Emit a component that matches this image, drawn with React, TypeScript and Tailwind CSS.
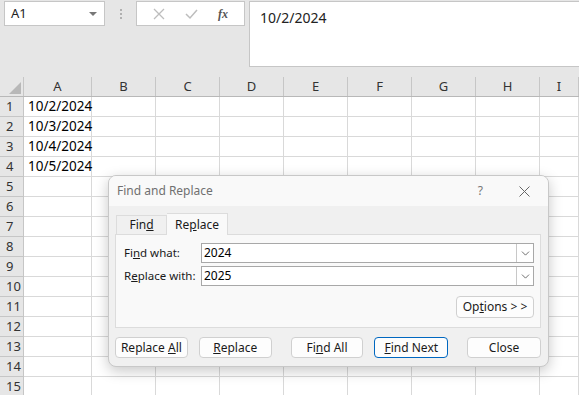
import { ChevronDown } from "lucide-react";

const cols = ["A", "B", "C", "D", "E", "F", "G", "H", "I"];
const widths = ["w-[68px]", "w-[64px]", "w-[64px]", "w-[64px]", "w-[64px]", "w-[64px]", "w-[64px]", "w-[64px]", "flex-1"];
const cells: Record<number, string> = { 1: "10/2/2024", 2: "10/3/2024", 3: "10/4/2024", 4: "10/5/2024" };
const rows = Array.from({ length: 15 }, (_, i) => i + 1);

function DialogButton({ children, primary, className = "" }: { children: React.ReactNode; primary?: boolean; className?: string }) {
    return (
        <button
            className={`h-[21px] rounded-[4px] bg-[#fdfdfd] text-[12px] text-[#1a1a1a] whitespace-nowrap flex items-center justify-center ${primary ? "border border-[#0067c0]" : "border border-[#d0d0d0]"} ${className}`}
        >{children}</button>
    )
}

function ComboInput({ value }: { value: string }) {
    return (
        <div className="flex-1 h-[20px] border border-[#a8a8a8] bg-white flex items-center">
            <span className="flex-1 pl-[2px] text-[12px] text-black">{value}</span>
            <div className="w-[17px] h-full border-l border-[#c8c8c8] flex items-center justify-center">
                <ChevronDown size={13} strokeWidth={1.4} className="text-[#444]" />
            </div>
        </div>
    )
}

export default function App() {
    return (
        <div className="relative w-[579px] h-[395px] overflow-hidden bg-white" style={{ fontFamily: '"Noto Sans", "Segoe UI", sans-serif' }}>

            {/* formula bar */}
            <div className="h-[77px] bg-[#e6e6e6] flex items-start pt-px">
                <div className="ml-[4px] w-[101px] h-[25px] bg-white border border-[#c6c6c6] flex items-center justify-between pl-[6px] pr-[7px]">
                    <span className="text-[13px] text-[#222]">A1</span>
                    <span className="w-0 h-0 border-l-[4px] border-r-[4px] border-t-[4px] border-l-transparent border-r-transparent border-t-[#777]"></span>
                </div>
                <div className="w-[31px] h-[25px] flex flex-col items-center justify-center gap-[2px]">
                    <span className="w-[2px] h-[2px] bg-[#b0b0b0]"></span>
                    <span className="w-[2px] h-[2px] bg-[#b0b0b0]"></span>
                    <span className="w-[2px] h-[2px] bg-[#b0b0b0]"></span>
                </div>
                <div className="w-[109px] h-[25px] bg-white border border-[#c6c6c6] flex items-center justify-around px-[6px]">
                    <svg width="12" height="12" viewBox="0 0 12 12"><path d="M1 1 L11 11 M11 1 L1 11" stroke="#bdbdbd" strokeWidth="1.3" fill="none" /></svg>
                    <svg width="13" height="12" viewBox="0 0 13 12"><path d="M1 6 L5 10 L12 2" stroke="#bdbdbd" strokeWidth="1.5" fill="none" /></svg>
                    <span className="text-[12px] italic font-semibold text-[#555]" style={{ fontFamily: '"Liberation Serif", serif' }}>fx</span>
                </div>
                <div className="ml-[4px] flex-1 h-[66px] bg-white border border-[#c6c6c6] border-r-0 pl-[10px] pt-[3px]">
                    <span className="text-[14px] text-[#222]">10/2/2024</span>
                </div>
            </div>

            {/* column headers */}
            <div className="flex h-[20px] bg-[#e6e6e6] border-b border-[#b8b8b8]">
                <div className="w-[24px] border-r border-[#c6c6c6] relative">
                    <svg className="absolute right-[2px] bottom-[2px]" width="12" height="12" viewBox="0 0 12 12"><path d="M12 0 L12 12 L0 12 Z" fill="#b8b8b8" /></svg>
                </div>
                {cols.map((c, i) => (
                    <div key={c} className={`${widths[i]} border-r border-[#c6c6c6] flex items-center justify-center text-[13px] text-[#333]`}>{c}</div>
                ))}
            </div>

            {/* rows */}
            {rows.map(r => (
                <div key={r} className="flex h-[20px]">
                    <div className="w-[24px] bg-[#e6e6e6] border-r border-b border-[#c6c6c6] flex items-center pl-[6px] text-[13px] text-[#333]">{r}</div>
                    {cols.map((c, i) => (
                        <div key={c} className={`${widths[i]} border-r border-b border-[#d9d9d9] flex items-center pl-[4px] text-[13.5px] text-black`}>
                            {i === 0 ? cells[r] : ""}
                        </div>
                    ))}
                </div>
            ))}

            {/* find and replace dialog */}
            <div className="absolute left-[108px] top-[175px] w-[441px] h-[192px] rounded-[8px] bg-[#f0f0f0] border border-[#c8c8c8] shadow-[0_4px_14px_rgba(0,0,0,0.22)] overflow-hidden flex flex-col">
                <div className="h-[30px] bg-[#f9f9f9] flex items-center justify-between pl-[8px] pr-[18px]">
                    <span className="text-[12px] text-[#707070]">Find and Replace</span>
                    <div className="flex items-center gap-[36px]">
                        <span className="text-[12px] text-[#777]">?</span>
                        <svg width="11" height="11" viewBox="0 0 11 11"><path d="M0.5 0.5 L10.5 10.5 M10.5 0.5 L0.5 10.5" stroke="#666" strokeWidth="1" fill="none" /></svg>
                    </div>
                </div>

                <div className="px-[6px] pt-[6px] flex flex-col">
                    <div className="flex items-end h-[22px] pl-px">
                        <div className="w-[51px] h-[19px] border border-b-0 border-[#dcdcdc] flex items-center justify-center text-[12px] text-[#1a1a1a]">
                            <span>Fin<u>d</u></span>
                        </div>
                        <div className="w-[61px] h-[22px] bg-[#f9f9f9] border border-b-0 border-l-0 border-[#dcdcdc] flex items-center justify-center text-[12px] text-[#1a1a1a] -mb-px relative z-10">
                            <span>Re<u>p</u>lace</span>
                        </div>
                    </div>
                    <div className="h-[94px] bg-[#f9f9f9] border border-[#dcdcdc] mr-[1px] pl-[8px] pr-[6px] pt-[8px] flex flex-col">
                        <div className="flex items-center">
                            <span className="w-[77px] whitespace-nowrap text-[11.5px] text-[#1a1a1a]">Fi<u>n</u>d what:</span>
                            <ComboInput value="2024" />
                        </div>
                        <div className="flex items-center mt-[3px]">
                            <span className="w-[77px] whitespace-nowrap text-[11.5px] text-[#1a1a1a]">R<u>e</u>place with:</span>
                            <ComboInput value="2025" />
                        </div>
                        <div className="flex justify-end mt-[10px]">
                            <DialogButton className="w-[78px] h-[22px]"><span>Op<u>t</u>ions &gt; &gt;</span></DialogButton>
                        </div>
                    </div>
                    <div className="flex items-center mt-[9px] pr-[1px]">
                        <DialogButton className="w-[73px]"><span>Replace <u>A</u>ll</span></DialogButton>
                        <DialogButton className="w-[73px] ml-[11px]"><span><u>R</u>eplace</span></DialogButton>
                        <DialogButton className="w-[73px] ml-[19px]"><span>Fi<u>n</u>d All</span></DialogButton>
                        <DialogButton primary className="w-[74px] ml-[11px]"><span><u>F</u>ind Next</span></DialogButton>
                        <DialogButton className="w-[74px] ml-[19px]"><span>Close</span></DialogButton>
                    </div>
                </div>
            </div>
        </div>
    )
}
